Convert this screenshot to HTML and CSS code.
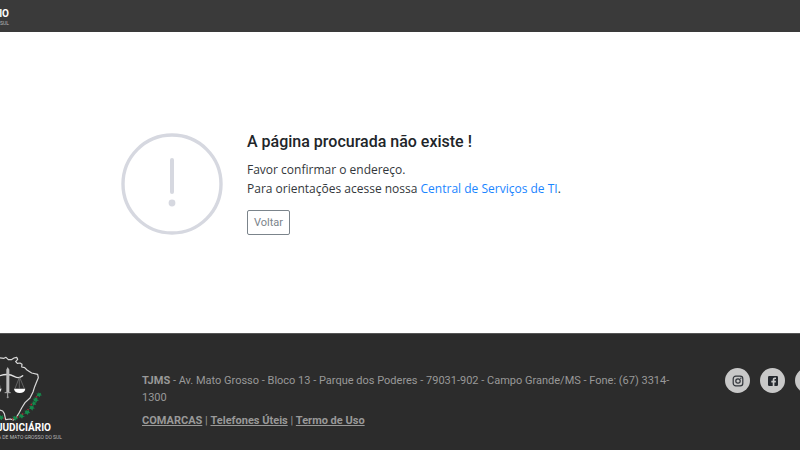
FILE: index.html
```html
<!DOCTYPE html>
<html lang="pt-br">

<head>
    <meta charset="UTF-8">
    <meta name="viewport" content="width=device-width, initial-scale=1.0">
    <title>TJMS</title>
    <link rel="stylesheet" href="styles.css">
</head>

<body>
    <header class="topo">
        <div class="marca">
            <span class="marca-nome">JUDICIÁRIO</span>
            <span class="marca-sub">MATO GROSSO DO SUL</span>
        </div>
    </header>

    <main class="conteudo">
        <svg class="aviso" viewBox="0 0 102 102" aria-hidden="true">
            <circle cx="51" cy="51" r="49" fill="none" stroke="#d6d8e0" stroke-width="3.4" />
            <path d="M51 27v32" stroke="#d6d8e0" stroke-width="4" stroke-linecap="round" />
            <circle cx="51" cy="70" r="3.4" fill="#d6d8e0" />
        </svg>
        <div class="mensagem">
            <h1>A página procurada não existe !</h1>
            <p>Favor confirmar o endereço.<br>
                Para orientações acesse nossa <a href="#">Central de Serviços de TI</a>.</p>
            <button type="button" class="btn">Voltar</button>
        </div>
    </main>

    <footer class="rodape">
        <div class="logo">
            <svg class="mapa" viewBox="0 90 195 198" aria-hidden="true">
                <path d="M-6 98l18 2 6-3 7 7 9 0 8-5 8-2 3 6-6 7 5 5 8-1 6 4-1 8 9 2 7 7 14 9 18 4 2 10-5 12-6 15-5 16-9 18-15 14-10 16-9 17-9 14-7 5-9-3-14 2-4-18-5-8-8-3" fill="none" stroke="#d8d8d8" stroke-width="3.6" stroke-linejoin="round" />
                <path d="M-8 155q30-13 52 0 13 7 24-3" fill="none" stroke="#e2e2e2" stroke-width="4" stroke-linecap="round" />
                <path d="M19 134l4-8 5 8v69h-9z" fill="#bdbdbd" />
                <path d="M14 203h18M23 203v14" stroke="#aaa" stroke-width="3" />
                <circle cx="23" cy="217" r="3" fill="#999" />
                <path d="M58 157L45 191M58 157v33M59 157l14 34" fill="none" stroke="#999" stroke-width="1.5" />
                <path d="M42 191h34q-2 13-17 13t-17-13z" fill="#fff" />
                <path d="M-14 191H4q-2 13-12 13zM-8 160L3 191" fill="#fff" stroke="#aaa" />
                <g fill="#158a4c">
                    <path d="M115 202l4 3 4-2-1 5 4 3-6 1-1 5-4-4-6 0 3-4-3-4 6 1zM104 216l4 3 5-1-2 5 6 3-6 2-2 5-4-4-6 1 3-5-4-4 6 0zM91 241l5 3 5-3-1 6 5 3-6 1-2 6-4-5-6 0 3-4-2-5 5 1zM78 255l5 2 4-2 0 5 4 4-6 1-2 5-4-4-6 0 3-5-3-4 6 0zM60 266l4 2 6-2-1 6 6 3-6 1-3 5-4-4-6 1 3-5-4-4 6 0zM42 272l4 3 6-2-2 5 5 4-6 1-3 4-4-4-5 0 3-4-3-5 5 1z" />
                    <path d="M0 270l4 4 5-4-1 6 5 4-6 1-2 5-5-4zM98 229l4 3 6-2-2 5 3 4-6 0-5 3 0-5-4-4 5 0z" />
                </g>
                <g fill="#a62c35">
                    <path d="M109 213l4 2-3 3-4-2zM91 238l3-3 3 4-4 3zM83 251l4 1-2 4-4-2zM67 264l4 3-3 3-4-3zM52 273l4 2-3 4-3-3zM36 279h4v5h-4zM11 278h4v5h-4z" />
                </g>
            </svg>
            <span class="logo-nome">JUDICIÁRIO</span>
            <span class="logo-sub">JUSTIÇA DE MATO GROSSO DO SUL</span>
        </div>
        <div class="endereco">
            <p><b>TJMS</b> - Av. Mato Grosso - Bloco 13 - Parque dos Poderes - 79031-902 - Campo Grande/MS - Fone: (67) 3314-1300</p>
            <p><a href="#">COMARCAS</a> | <a href="#">Telefones Úteis</a> | <a href="#">Termo de Uso</a></p>
        </div>
        <nav class="redes">
            <a href="#" aria-label="Instagram">
                <svg viewBox="0 0 12 12" fill="none" stroke="#30343a">
                    <rect x="1.2" y="1.2" width="9.6" height="9.6" rx="2.6" stroke-width="1.2" />
                    <circle cx="6" cy="6" r="2.2" stroke-width="1.2" />
                    <circle cx="8.8" cy="3.2" r=".7" fill="#30343a" stroke="none" />
                </svg>
            </a>
            <a href="#" aria-label="Facebook">
                <svg viewBox="0 0 12 12">
                    <rect x="1" y="1" width="10" height="10" rx="1.2" fill="#24282e" />
                    <path d="M5.7 11V7.4H4.3V5.8h1.4V4.7c0-1.5.9-2.2 2.1-2.2l1.2.1V4h-.7c-.7 0-.9.4-.9.9v.9H9l-.3 1.6H7.4V11z" fill="#c8c8c8" />
                </svg>
            </a>
            <a href="#" aria-label="YouTube"></a>
        </nav>
    </footer>
</body>

</html>
```

FILE: styles.css
```css
* {
    box-sizing: border-box;
}

body {
    margin: 0;
    min-height: 100vh;
    display: flex;
    flex-direction: column;
    overflow: hidden;
    background: #fff;
    color: #212529;
    font-family: Roboto, "Liberation Sans", sans-serif;
}

p,
h1 {
    margin: 0;
}

.topo {
    padding: 7px 0 6px;
    background: #3a3a3a;
}

.marca,
.logo {
    display: flex;
    flex-direction: column;
    align-items: flex-end;
    white-space: nowrap;
    color: #fff;
}

.marca {
    width: 9px;
}

.marca-nome,
.logo-nome {
    font-size: 10px;
    font-weight: bold;
    line-height: 13px;
}

.marca-sub,
.logo-sub {
    font-size: 5px;
    line-height: 6px;
    color: #bbb;
}

.conteudo {
    flex: 1;
    display: flex;
    align-items: center;
    gap: 24px;
    padding: 2px 15% 0;
}

.aviso {
    flex: none;
    width: 102px;
    margin-left: 1px;
}

.mensagem h1 {
    margin-bottom: 8px;
    font-size: 16px;
    font-weight: 500;
    line-height: 20px;
}

.mensagem p {
    margin-bottom: 12px;
    color: #33373b;
    font: 12px/19px "Open Sans", "Noto Sans", sans-serif;
}

.mensagem a {
    color: #1a85ff;
    text-decoration: none;
}

.btn {
    display: block;
    padding: 3px 6px;
    border: 1px solid #7b848b;
    border-radius: 2px;
    background: transparent;
    color: #7b848b;
    font: 11px/17px Roboto, sans-serif;
}

.rodape {
    display: flex;
    align-items: flex-start;
    padding: 21px 0 10px;
    border-top: 1px solid #555;
    background: #2c2c2c;
    color: #999;
}

.logo {
    flex: none;
    width: 65px;
    padding-right: 3px;
}

.mapa {
    width: 65px;
    height: 66px;
    margin-right: -3px;
}

.logo-nome {
    margin-right: 11px;
}

.endereco {
    flex: 1;
    padding: 17px 50px 0 77px;
    font-size: 11px;
    line-height: 17px;
}

.endereco p {
    margin-bottom: 6px;
}

.endereco a {
    color: #999;
    font-weight: bold;
}

.redes {
    flex: none;
    display: flex;
    gap: 10px;
    width: 75px;
    padding-top: 13px;
}

.redes a {
    flex: none;
    display: grid;
    place-items: center;
    width: 25px;
    height: 25px;
    border-radius: 50%;
    background: #c8c8c8;
}

.redes svg {
    width: 12px;
    height: 12px;
}
```
